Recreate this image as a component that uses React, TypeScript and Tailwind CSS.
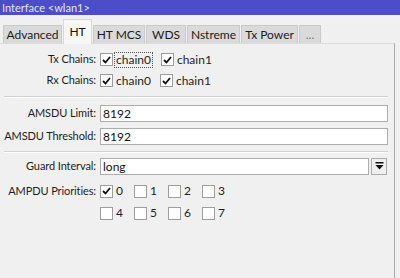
import { ReactNode } from "react";

const font = { fontFamily: 'Lato, "Liberation Sans", sans-serif' };

function Check({ on }: { on?: boolean }) {
  return (
    <div className="w-[13px] h-[13px] bg-white border border-[#9d9d9d] flex items-center justify-center shrink-0">
      {on && (
        <svg width="9" height="8" viewBox="0 0 9 8">
          <path d="M1 4 L3.5 6.5 L8 1" fill="none" stroke="#111" strokeWidth="1.8" />
        </svg>
      )}
    </div>
  );
}

function Box({ on, label, focus }: { on?: boolean; label: string; focus?: boolean }) {
  return (
    <div className="flex items-center gap-[3px]">
      <Check on={on} />
      <span
        className={`text-[12px] leading-[14px] text-[#1e1e1e] ${
          focus ? "outline outline-1 outline-dotted outline-[#555] px-[1px] -ml-[1px]" : ""
        }`}
      >
        {label}
      </span>
    </div>
  );
}

function Row({ label, children, h = "h-[21px]" }: { label: string; children: ReactNode; h?: string }) {
  return (
    <div className={`flex items-center ${h}`}>
      <div className="w-[97px] shrink-0 text-right pr-[1px] text-[11px] tracking-[-0.1px] text-[#1e1e1e] whitespace-nowrap">
        {label}
      </div>
      <div className="ml-[3px] flex-1 flex items-center">{children}</div>
    </div>
  );
}

function Field({ value }: { value: string }) {
  return (
    <div className="flex-1 h-[17px] bg-white border border-[#adadad] text-[12px] leading-[15px] pl-[2px] text-[#111]">
      {value}
    </div>
  );
}

function Sep() {
  return <div className="mx-[4px] mr-[6px] border-t border-[#d2d2d2] border-b border-b-white" />;
}

const tabs: [string, string][] = [
  ["Advanced", "w-[59px]"],
  ["HT", "w-[29px]"],
  ["HT MCS", "w-[52px]"],
  ["WDS", "w-[40px]"],
  ["Nstreme", "w-[53px]"],
  ["Tx Power", "w-[57px]"],
  ["...", "w-[22px]"],
];

export default function App() {
  return (
    <div className="w-[400px] h-[278px] bg-[#f0f0f0] flex flex-col overflow-hidden" style={font}>
      <div className="h-[15px] bg-[#4b4dc9] text-[#e4e4ff] text-[11px] leading-[15px] pl-[2px]">
        Interface &lt;wlan1&gt;
      </div>
      <div className="h-[28px] flex items-end pl-[3px] gap-[1px]">
        {tabs.map(([t, w]) =>
          t === "HT" ? (
            <div
              key={t}
              className={`${w} h-[25px] text-center bg-[#f7f7f7] border border-b-0 border-[#d8d8d8] text-[12px] text-[#111] pt-[3px] -mb-[1px] relative`}
            >
              {t}
            </div>
          ) : (
            <div
              key={t}
              className={`${w} h-[18px] text-center bg-[#dadada] border border-b-0 border-[#cacaca] text-[12px] leading-[17px] ${
                t === "..." ? "text-[#777]" : "text-[#1a1a1a]"
              }`}
            >
              {t}
            </div>
          )
        )}
      </div>
      <div className="flex-1 mr-[5px] border-t border-[#dcdcdc] border-r border-r-[#a9a9a9] flex flex-col">
        <div className="h-[5px]" />
        <Row label="Tx Chains:">
          <div className="flex gap-[9px]">
            <Box on label="chain0" focus />
            <Box on label="chain1" />
          </div>
        </Row>
        <Row label="Rx Chains:">
          <div className="flex gap-[9px]">
            <Box on label="chain0" />
            <Box on label="chain1" />
          </div>
        </Row>
        <div className="h-[5px]" />
        <Sep />
        <div className="h-[4px]" />
        <Row label="AMSDU Limit:" h="h-[23px]">
          <div className="flex-1 mr-[6px] flex">
            <Field value="8192" />
          </div>
        </Row>
        <Row label="AMSDU Threshold:" h="h-[23px]">
          <div className="flex-1 mr-[6px] flex">
            <Field value="8192" />
          </div>
        </Row>
        <div className="h-[3px]" />
        <Sep />
        <div className="h-[2px]" />
        <Row label="Guard Interval:" h="h-[22px]">
          <div className="flex-1 mr-[7px] flex gap-[2px]">
            <Field value="long" />
            <div className="w-[16px] h-[17px] bg-[#efefef] border border-[#acacac] flex items-center justify-center">
              <svg width="9" height="8" viewBox="0 0 9 8">
                <rect x="0.5" y="0" width="8" height="1.5" fill="#111" />
                <path d="M0.5 3 L8.5 3 L4.5 7.5 Z" fill="#111" />
              </svg>
            </div>
          </div>
        </Row>
        <div className="h-[3px]" />
        <Row label="AMPDU Priorities:" h="h-[22px]">
          <div className="flex gap-[11px]">
            <Box on label="0" />
            <Box label="1" />
            <Box label="2" />
            <Box label="3" />
          </div>
        </Row>
        <Row label="" h="h-[22px]">
          <div className="flex gap-[11px]">
            <Box label="4" />
            <Box label="5" />
            <Box label="6" />
            <Box label="7" />
          </div>
        </Row>
      </div>
    </div>
  );
}
